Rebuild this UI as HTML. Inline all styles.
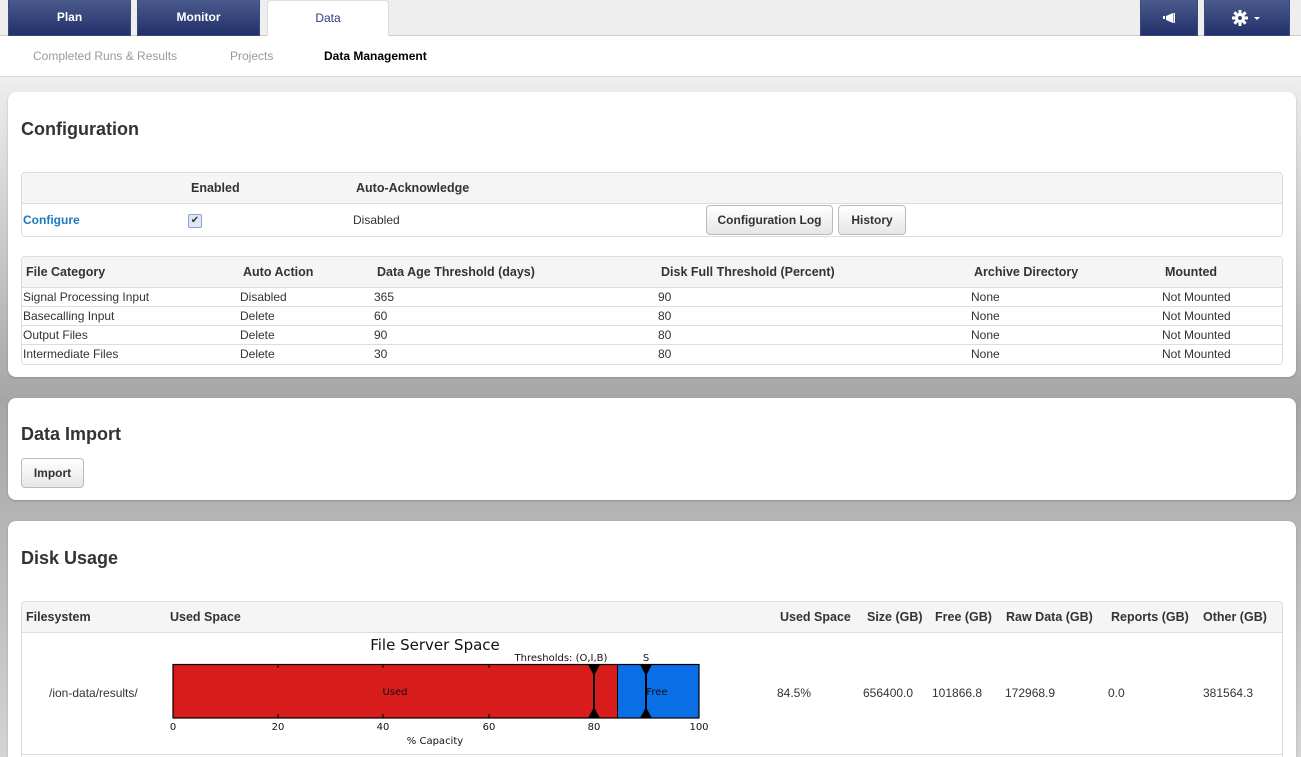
<!DOCTYPE html>
<html><head><meta charset="utf-8"><style>
*{box-sizing:border-box;margin:0;padding:0}
html{width:1301px;height:757px;overflow:hidden}
body{width:1301px;height:757px;overflow:hidden;font-family:"Liberation Sans",Arial,sans-serif;font-size:12px;color:#333;position:relative;
background:linear-gradient(to bottom,#eee 0px,#eee 80px,#c8c8c8 250px,#a6a6a6 400px,#b4b4b4 520px,#d4d4d4 757px);}
.abs{position:absolute}
.top{left:0;top:0;width:1301px;height:36px;background:#eee;border-bottom:1px solid #ccc}
.tab{position:absolute;top:0;height:36px;background:linear-gradient(#4a5a8c,#22306a);color:#fff;font-weight:bold;font-size:12px;text-align:center;line-height:34px;border:1px solid #3a4a7a;border-top:none}
.sub{left:0;top:36px;width:1301px;height:41px;background:#fff;border-bottom:1px solid #ddd}
.sub span{position:absolute;top:13px;font-size:12px;color:#999}
.panel{position:absolute;left:8px;width:1288px;background:#fff;border-radius:8px;box-shadow:0 1px 2px rgba(0,0,0,.2)}
h2{position:absolute;left:13px;font-size:18px;font-weight:bold;color:#333}
.tbl{position:absolute;left:13px;width:1262px;border:1px solid #ddd;border-radius:4px;overflow:hidden}
.hd{background:#f5f5f5;border-bottom:1px solid #ddd;position:relative}
.hd b,.row span{position:absolute}
.hd b{font-size:12.5px;color:#333}
.row{position:relative;border-bottom:1px solid #ddd;height:19px}
.row:last-child{border-bottom:none}
.row span{top:2px;font-size:12px;color:#333}
.btn{position:absolute;height:30px;border:1px solid #bbb;border-radius:4px;background:linear-gradient(#fff,#e6e6e6);font-weight:bold;font-size:12px;line-height:28px;text-align:center;color:#333}
</style></head><body>
<div class="abs top"></div>
<div class="tab" style="left:8px;width:123px">Plan</div>
<div class="tab" style="left:137px;width:123px">Monitor</div>
<div class="abs" style="left:267px;top:0;width:122px;height:37px;background:#fff;border:1px solid #ddd;border-bottom:none;border-radius:4px 4px 0 0;text-align:center;line-height:34px;color:#2a3a7a;font-size:12px">Data</div>
<div class="tab" style="left:1140px;width:58px"><svg width="14" height="12" viewBox="0 0 14 12" style="vertical-align:middle"><rect x="1" y="4" width="2" height="3" fill="#fff"/><path d="M4 4 L11 1 L11 11 L4 8 Z" fill="#fff"/><rect x="11.5" y="1" width="1.5" height="10" fill="#fff"/></svg></div>
<div class="tab" style="left:1204px;width:86px"><svg width="30" height="16" viewBox="0 0 30 16" style="vertical-align:middle"><g transform="translate(8,8)" fill="#fff"><circle r="5"/><g><rect x="-1.5" y="-8" width="3" height="16"/><rect x="-8" y="-1.5" width="16" height="3"/><rect x="-1.5" y="-8" width="3" height="16" transform="rotate(45)"/><rect x="-1.5" y="-8" width="3" height="16" transform="rotate(-45)"/></g><circle r="2" fill="#33437a"/></g><path d="M22 7 L28 7 L25 10 Z" fill="#fff"/></svg></div>
<div class="abs sub"><span style="left:33px">Completed Runs &amp; Results</span><span style="left:230px">Projects</span><span style="left:324px;color:#000;font-weight:bold">Data Management</span></div>

<div class="panel" style="top:92px;height:285px">
<h2 style="top:27px">Configuration</h2>
<div class="tbl" style="top:80px;height:65px">
 <div class="hd" style="height:31px"><b style="left:169px;top:8px">Enabled</b><b style="left:334px;top:8px">Auto-Acknowledge</b></div>
 <div style="position:relative;height:32px">
  <span class="abs" style="left:1px;top:9px;color:#1a7ac0;font-weight:bold">Configure</span>
  <span class="abs" style="left:166px;top:10px;width:14px;height:14px;border:1px solid #8aa6d8;border-radius:2px;background:#dde6f2;font-size:10px;line-height:12px;text-align:center;color:#333">✔</span>
  <span class="abs" style="left:331px;top:9px">Disabled</span>
  <div class="btn" style="left:684px;top:1px;width:127px">Configuration Log</div>
  <div class="btn" style="left:816px;top:1px;width:68px">History</div>
 </div>
</div>
<div class="tbl" style="top:164px;height:109px">
 <div class="hd" style="height:31px"><b style="left:4px;top:8px">File Category</b><b style="left:221px;top:8px">Auto Action</b><b style="left:355px;top:8px">Data Age Threshold (days)</b><b style="left:639px;top:8px">Disk Full Threshold (Percent)</b><b style="left:952px;top:8px">Archive Directory</b><b style="left:1143px;top:8px">Mounted</b></div>
 <div class="row"><span style="left:1px">Signal Processing Input</span><span style="left:218px">Disabled</span><span style="left:352px">365</span><span style="left:636px">90</span><span style="left:949px">None</span><span style="left:1140px">Not Mounted</span></div>
 <div class="row"><span style="left:1px">Basecalling Input</span><span style="left:218px">Delete</span><span style="left:352px">60</span><span style="left:636px">80</span><span style="left:949px">None</span><span style="left:1140px">Not Mounted</span></div>
 <div class="row"><span style="left:1px">Output Files</span><span style="left:218px">Delete</span><span style="left:352px">90</span><span style="left:636px">80</span><span style="left:949px">None</span><span style="left:1140px">Not Mounted</span></div>
 <div class="row"><span style="left:1px">Intermediate Files</span><span style="left:218px">Delete</span><span style="left:352px">30</span><span style="left:636px">80</span><span style="left:949px">None</span><span style="left:1140px">Not Mounted</span></div>
</div>
</div>

<div class="panel" style="top:398px;height:102px">
<h2 style="top:26px">Data Import</h2>
<div class="btn" style="left:13px;top:60px;width:63px">Import</div>
</div>

<div class="panel" style="top:521px;height:236px;border-radius:8px 8px 0 0">
<h2 style="top:27px">Disk Usage</h2>
<div class="tbl" style="top:80px;height:160px;border-radius:4px 4px 0 0">
 <div class="hd" style="height:31px"><b style="left:4px;top:8px">Filesystem</b><b style="left:148px;top:8px">Used Space</b><b style="left:758px;top:8px">Used Space</b><b style="left:845px;top:8px">Size (GB)</b><b style="left:913px;top:8px">Free (GB)</b><b style="left:984px;top:8px">Raw Data (GB)</b><b style="left:1089px;top:8px">Reports (GB)</b><b style="left:1181px;top:8px">Other (GB)</b></div>
 <div style="position:relative;height:122px;border-bottom:1px solid #ddd">
  <span class="abs" style="left:27px;top:53px">/ion-data/results/</span>
  <span class="abs" style="left:755px;top:53px">84.5%</span>
  <span class="abs" style="left:841px;top:53px">656400.0</span>
  <span class="abs" style="left:910px;top:53px">101866.8</span>
  <span class="abs" style="left:983px;top:53px">172968.9</span>
  <span class="abs" style="left:1086px;top:53px">0.0</span>
  <span class="abs" style="left:1181px;top:53px">381564.3</span>
 </div>
</div>
</div>

<svg class="abs" style="left:160px;top:632px" width="560" height="120" viewBox="160 632 560 120" font-family="DejaVu Sans,sans-serif">
<text x="435" y="650" font-size="15" text-anchor="middle" fill="#111">File Server Space</text>
<text x="561" y="661" font-size="10" text-anchor="middle" fill="#111">Thresholds: (O,I,B)</text>
<text x="646" y="661" font-size="10" text-anchor="middle" fill="#111">S</text>
<rect x="173" y="664.5" width="444.5" height="53.5" fill="#d81b1b"/>
<rect x="617.5" y="664.5" width="81.5" height="53.5" fill="#0a6fe6"/>
<line x1="617.5" y1="664.5" x2="617.5" y2="718" stroke="#000"/>
<path d="M588 664.5 L600 664.5 L595 674 L595 709 L600 718 L588 718 L593 709 L593 674 Z" fill="#000"/>
<path d="M640 664.5 L652 664.5 L647 674 L647 709 L652 718 L640 718 L645 709 L645 674 Z" fill="#000"/>
<rect x="173" y="664.5" width="526" height="53.5" fill="none" stroke="#000" stroke-width="1.2"/>
<g stroke="#000"><line x1="278" y1="664.5" x2="278" y2="668"/><line x1="383" y1="664.5" x2="383" y2="668"/><line x1="489" y1="664.5" x2="489" y2="668"/><line x1="278" y1="718" x2="278" y2="714"/><line x1="383" y1="718" x2="383" y2="714"/><line x1="489" y1="718" x2="489" y2="714"/></g>
<text x="395" y="695" font-size="10" text-anchor="middle" fill="#111">Used</text>
<text x="657" y="695" font-size="10" text-anchor="middle" fill="#111">Free</text>
<g font-size="10" text-anchor="middle" fill="#111"><text x="173" y="730">0</text><text x="278" y="730">20</text><text x="383" y="730">40</text><text x="489" y="730">60</text><text x="594" y="730">80</text><text x="699" y="730">100</text><text x="435" y="744">% Capacity</text></g>
</svg>
</body></html>
